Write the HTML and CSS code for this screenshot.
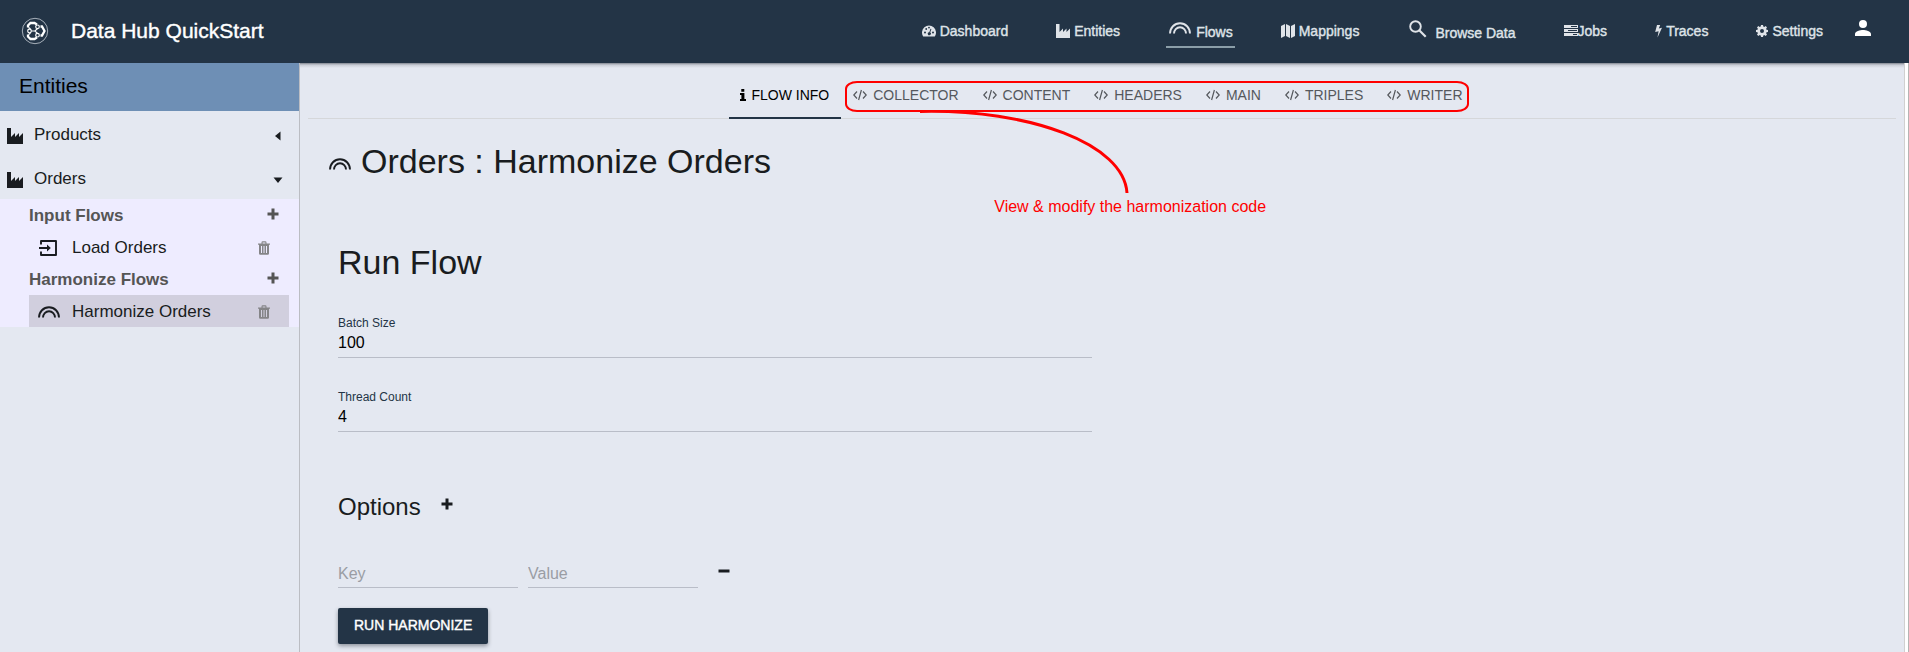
FILE: index.html
```html
<!DOCTYPE html>
<html lang="en">
<head>
<meta charset="utf-8">
<title>Data Hub QuickStart</title>
<link rel="stylesheet" href="styles.css">
</head>
<body>
<svg class="defs" aria-hidden="true">
  <symbol id="factory" viewBox="0 0 16 16"><path d="M0 0h4v9l4-4v4l4-4v4l4-4v11H0z"/></symbol>
  <symbol id="rainbow" viewBox="0 0 22 12"><path d="M1 11.500a10 10.300 0 0 1 20 0M5 11.500a6 6.300 0 0 1 12 0" fill="none" stroke="currentColor" stroke-width="1.900"/></symbol>
  <symbol id="code" viewBox="0 0 14 12"><path d="M4 2.500.8 6 4 9.500M10 2.500 13.200 6 10 9.500M8.400 1 5.600 11" fill="none" stroke="currentColor" stroke-width="1.200"/></symbol>
  <symbol id="trash" viewBox="0 0 12 14"><path d="M0 2.500h3.500V1.500Q3.500.3 4.700.3h2.600q1.200 0 1.200 1.200v1H12v1.300h-1V12.500q0 1.300-1.300 1.300H2.300Q1 13.800 1 12.500V3.800H0zM4.600 2.500h2.800v-1H4.600zM3 5v7h1V5zm2.500 0v7h1V5zM8 5v7h1V5z" fill-rule="evenodd"/></symbol>
  <symbol id="plus" viewBox="0 0 12 12"><path d="M4.500.5h3v4h4v3h-4v4h-3v-4h-4v-3h4z"/></symbol>
</svg>

<header class="topbar">
  <svg class="logo" viewBox="0 0 28 28">
    <circle cx="14" cy="14" r="12.700" fill="none" stroke="#b4bcc5" stroke-width=".9"/>
    <g fill="none" stroke="#fff" stroke-width="2.300"><path d="M7 10.500V8.500L9.500 6h4l2.500 1.500M7 17.500v2L9.500 22h4l2.500-1.500M19.500 9.500h1.500L23.500 14l-2.500 4.500h-1.500"/></g>
    <g fill="none" stroke="#fff" stroke-width="1.200"><circle cx="8.500" cy="14" r="1.800"/><circle cx="16.500" cy="9.800" r="1.800"/><circle cx="16.500" cy="18.200" r="1.800"/><path d="M10.300 14h3.500M16.500 11.600 13.800 14l2.700 2.400M7.500 10.500l2 1.200M7.500 17.500l2-1.200"/></g>
  </svg>
  <h1 class="brand">Data Hub QuickStart</h1>
  <nav class="nav">
    <a href="#"><svg class="i14" viewBox="0 0 14 14"><path d="M1.200 12.500A7 7 0 1 1 12.800 12.500zM2 8.500a.9.9 0 1 0 2 0 .9.9 0 1 0-2 0M3.300 5a.9.900 0 1 0 1.800 0 .9.900 0 1 0-1.800 0M6.100 3.600a.9.900 0 1 0 1.800 0 .9.900 0 1 0-1.800 0M10 8.500a.9.900 0 1 0 2 0 .9.900 0 1 0-2 0M8.500 4.800 7.300 8.200a1.500 1.500 0 1 0 .9.300L9.400 5z" fill-rule="evenodd"/></svg>Dashboard</a>
    <a href="#"><svg class="i14"><use href="#factory"/></svg>Entities</a>
    <a href="#" class="active"><svg class="arc"><use href="#rainbow"/></svg>Flows</a>
    <a href="#"><svg class="i14" viewBox="0 0 14 14"><path d="M0 2 4 0v12l-4 2zM5 0l4 2v12l-4-2zM10 2l4-2v12l-4 2z"/></svg>Mappings</a>
    <a href="#" class="browse"><svg class="search" viewBox="0 0 18 18"><circle cx="6.500" cy="6.500" r="5.300" fill="none" stroke="currentColor" stroke-width="1.900"/><path d="m10.500 10.500 6.200 6.200" stroke="currentColor" stroke-width="2.200"/></svg>Browse Data</a>
    <a href="#" class="tight"><svg class="i14" viewBox="0 0 14 14"><path d="M0 1h14v3H0zM0 5h14v3H0zM0 9h14v3H0z"/><path d="M7 2.500h6M4 6.500h9M9 10.500h4" stroke="#233446"/></svg>Jobs</a>
    <a href="#"><svg class="bolt" viewBox="0 0 7 14"><path d="M2 1h3.200L3.800 4.500 7 3.800 2.500 13.500 3.600 7.200.2 8z"/></svg>Traces</a>
    <a href="#"><svg class="gear" viewBox="0 0 12 12"><path d="M5 0h2l.3 1.600 1 .4 1.400-.9 1.300 1.300-.9 1.400.4 1L12 5v2l-1.500.3-.4 1 .9 1.300L9.700 11l-1.400-.9-1 .4L7 12H5l-.3-1.500-1-.4-1.400.9L1 9.600l.9-1.300-.4-1L0 7V5l1.500-.2.4-1L1 2.400l1.300-1.300 1.400.9 1-.4zM6 4a2 2 0 1 0 0 4 2 2 0 0 0 0-4z" fill-rule="evenodd"/></svg>Settings</a>
  </nav>
  <button class="user" aria-label="Account"><svg viewBox="0 0 24 24"><path d="M12 12a4 4 0 1 0 0-8 4 4 0 0 0 0 8zm0 2c-2.700 0-8 1.300-8 4v2h16v-2c0-2.700-5.300-4-8-4z"/></svg></button>
</header>

<div class="layout">
  <aside class="sidebar">
    <h2 class="side-title">Entities</h2>
    <button class="entity"><svg class="i16"><use href="#factory"/></svg><span>Products</span><svg class="caret" viewBox="0 0 10 10"><path d="M7.500.5v9L2 5z"/></svg></button>
    <button class="entity"><svg class="i16"><use href="#factory"/></svg><span>Orders</span><svg class="caret" viewBox="0 0 10 10"><path d="M.5 2.500h9L5 8z"/></svg></button>
    <div class="flows">
      <div class="group"><span>Input Flows</span><button aria-label="Add input flow"><svg class="i12"><use href="#plus"/></svg></button></div>
      <div class="flow"><svg class="enter" viewBox="0 0 18 16"><path d="M2 4.500V1h15v14H2v-3.500M0 8h10" fill="none" stroke="currentColor" stroke-width="1.900" stroke-linejoin="round"/><path d="M8 4.500 11.800 8 8 11.500z"/></svg><span>Load Orders</span><button aria-label="Delete Load Orders"><svg class="bin"><use href="#trash"/></svg></button></div>
      <div class="group"><span>Harmonize Flows</span><button aria-label="Add harmonize flow"><svg class="i12"><use href="#plus"/></svg></button></div>
      <div class="flow selected"><svg class="arc"><use href="#rainbow"/></svg><span>Harmonize Orders</span><button aria-label="Delete Harmonize Orders"><svg class="bin"><use href="#trash"/></svg></button></div>
    </div>
  </aside>

  <main class="content">
    <div class="tabs">
      <button class="tab current"><svg class="info" viewBox="0 0 6 12"><path d="M1.300 0h3v2.700h-3zM0 4h4.400v6H6v2H0v-2h1.400V6H0z"/></svg>FLOW INFO</button>
      <div class="code-tabs">
        <button class="tab"><svg class="code"><use href="#code"/></svg>COLLECTOR</button>
        <button class="tab"><svg class="code"><use href="#code"/></svg>CONTENT</button>
        <button class="tab"><svg class="code"><use href="#code"/></svg>HEADERS</button>
        <button class="tab"><svg class="code"><use href="#code"/></svg>MAIN</button>
        <button class="tab"><svg class="code"><use href="#code"/></svg>TRIPLES</button>
        <button class="tab"><svg class="code"><use href="#code"/></svg>WRITER</button>
        <div class="callout-box"></div>
        <svg class="callout-line" viewBox="0 0 210 84"><path d="M0 1.500C110-1 204 34 207 83" fill="none" stroke="red" stroke-width="3"/></svg>
        <p class="callout-text">View &amp; modify the harmonization code</p>
      </div>
    </div>

    <h2 class="page-title"><svg class="arc"><use href="#rainbow"/></svg>Orders : Harmonize Orders</h2>

    <form class="run">
      <h2 class="run-title">Run Flow</h2>
      <div class="field"><label for="batch">Batch Size</label><input id="batch" type="text" value="100"></div>
      <div class="field"><label for="threads">Thread Count</label><input id="threads" type="text" value="4"></div>
      <div class="options-head"><h3>Options</h3><button type="button" aria-label="Add option"><svg class="i12"><use href="#plus"/></svg></button></div>
      <div class="option">
        <input class="key" type="text" placeholder="Key" aria-label="Key">
        <input class="value" type="text" placeholder="Value" aria-label="Value">
        <button type="button" aria-label="Remove option"><svg class="i12" viewBox="0 0 12 12"><path d="M.5 4.500h11v3H.5z"/></svg></button>
      </div>
      <button type="button" class="primary">RUN HARMONIZE</button>
    </form>
  </main>
</div>
</body>
</html>
```
FILE: styles.css
```css
* { box-sizing: border-box; }

body {
  margin: 0;
  min-height: 100vh;
  display: flex;
  flex-direction: column;
  font: 16px "Liberation Sans", Arial, sans-serif;
  color: #191c20;
  background: #fff;
}

h1, h2, h3, p { margin: 0; font-weight: 400; }
svg { display: block; flex: none; fill: currentColor; }
button { border: 0; padding: 0; background: none; font: inherit; color: inherit; cursor: pointer; }
.defs { position: absolute; width: 0; height: 0; }

.i12 { width: 12px; height: 12px; }
.i14 { width: 14px; height: 14px; }
.i16 { width: 16px; height: 16px; }
.arc { width: 22px; height: 12px; }

/* Top bar */
.topbar {
  display: flex;
  align-items: center;
  height: 63px;
  padding: 0 34px 2px 21px;
  background: #233446;
  color: #fff;
}
.logo { width: 28px; height: 28px; }
.brand { margin-left: 22px; font-size: 21px; line-height: 24px; -webkit-text-stroke: 0.4px; }
.nav { display: flex; align-items: center; gap: 48px; margin-left: auto; }
.nav a {
  display: flex;
  align-items: center;
  gap: 4px;
  color: #dfe3e8;
  font-size: 14px;
  line-height: 20px;
  text-decoration: none;
  -webkit-text-stroke: 0.4px;
}
.nav svg { -webkit-text-stroke: 0; }
.nav .active { gap: 5px; padding: 8px 2px 4px 3px; margin: 0 -2px; border-bottom: 2px solid #8b9ea8; }
.nav .active .arc, .nav .search { margin-bottom: 8px; }
.nav .browse { gap: 8px; padding-top: 4px; margin-left: 2px; }
.nav .tight { gap: 0; }
.search { width: 18px; height: 18px; }
.bolt { width: 7px; height: 14px; }
.gear { width: 12px; height: 12px; }
.user { margin: 0 0 6px 28px; }
.user svg { width: 24px; height: 24px; }

/* Sidebar */
.layout { flex: 1; display: flex; padding-right: 3px; border-right: 1px solid #b5b5b5; }
.sidebar { width: 300px; flex: none; border-right: 1px solid #bbbdc3; background: #e4e8f1; }
.side-title {
  height: 48px;
  padding-left: 19px;
  background: #6e8fb5;
  color: #000;
  font-size: 21px;
  line-height: 46px;
}
.entity {
  display: flex;
  align-items: center;
  gap: 11px;
  width: 100%;
  height: 44px;
  padding: 3px 16px 0 7px;
  font-size: 17px;
  text-align: left;
}
.entity span, .flow span, .group span { flex: 1; }
.entity svg { margin-top: 2px; }
.caret { width: 10px; height: 10px; }
.flows { padding: 0 10px 0 29px; background: #eeecff; font-size: 17px; }
.group, .flow { display: flex; align-items: center; height: 32px; padding-top: 1px; }
.group { padding-right: 10px; color: #555; font-weight: 700; }
.group button { padding-bottom: 4px; }
.flow { padding: 1px 19px 0 10px; }
.flow span { padding-left: 15px; }
.flow .arc { margin-right: -3px; margin-left: -1px; }
.flow.selected { background: #d1cfde; }
.flow .enter { width: 18px; height: 16px; }
.flow button { color: #858588; }
.bin { width: 12px; height: 14px; }

/* Content */
.content {
  flex: 1;
  min-width: 0;
  padding: 8px;
  border-right: 1px solid #d0d0d0;
  background: linear-gradient(#80858f, #c9cdd6 2px, #e4e8f1 5px);
}
.tabs { display: flex; justify-content: center; border-bottom: 1px solid #d5d7da; }
.tab {
  display: flex;
  align-items: center;
  gap: 6px;
  height: 48px;
  padding: 0 12px;
  margin-bottom: -1px;
  color: #55585d;
  font-size: 14px;
}
.tab.current { gap: 5px; padding-left: 11px; color: #000; border-bottom: 2px solid #233446; border-top: 2px solid transparent; }
.info { width: 6px; height: 12px; }
.code { width: 14px; height: 12px; }

/* Annotation laid over the tabs */
.code-tabs { position: relative; display: flex; }
.callout-box { position: absolute; inset: 10px 6px 6px 4px; border: 2px solid red; border-radius: 12px / 8px; pointer-events: none; }
.callout-line { position: absolute; left: 79px; top: 39px; width: 210px; height: 84px; pointer-events: none; }
.callout-text { position: absolute; left: 153px; top: 126px; color: red; font-size: 16px; line-height: 20px; white-space: nowrap; }

.page-title { display: flex; align-items: center; gap: 10px; margin: 22px 0 0 21px; font-size: 34px; line-height: 40px; }
.page-title .arc { margin-top: 5px; }

.run { display: flex; flex-direction: column; padding: 61px 50px 0 30px; }
.run-title { margin-bottom: 33px; font-size: 34px; line-height: 40px; }
.field { display: flex; flex-direction: column; width: 50%; margin-bottom: 31px; }
.field label { font-size: 12px; line-height: 16px; color: #233446; }
input {
  height: 27px;
  padding: 0 0 2px;
  border: 0;
  border-bottom: 1px solid #b9bdc8;
  border-radius: 0;
  background: none;
  color: #000;
  font: inherit;
}
input::placeholder { color: #9a9da4; }
.options-head { display: flex; align-items: center; gap: 20px; margin: 28px 0 38px; }
.options-head h3 { font-size: 24px; line-height: 32px; }
.options-head button { padding-bottom: 6px; }
.option { display: flex; align-items: center; gap: 10px; margin-bottom: 20px; }
.option input { padding: 0; }
.key { width: 180px; }
.value { width: 170px; }
.option button { margin: 0 0 8px 10px; }
.primary {
  align-self: flex-start;
  height: 36px;
  padding: 0 16px 2px;
  border-radius: 2px;
  background: #233446;
  color: #fff;
  font-size: 14px;
  -webkit-text-stroke: 0.4px;
  box-shadow: 0 2px 4px #8d929b;
}
```
